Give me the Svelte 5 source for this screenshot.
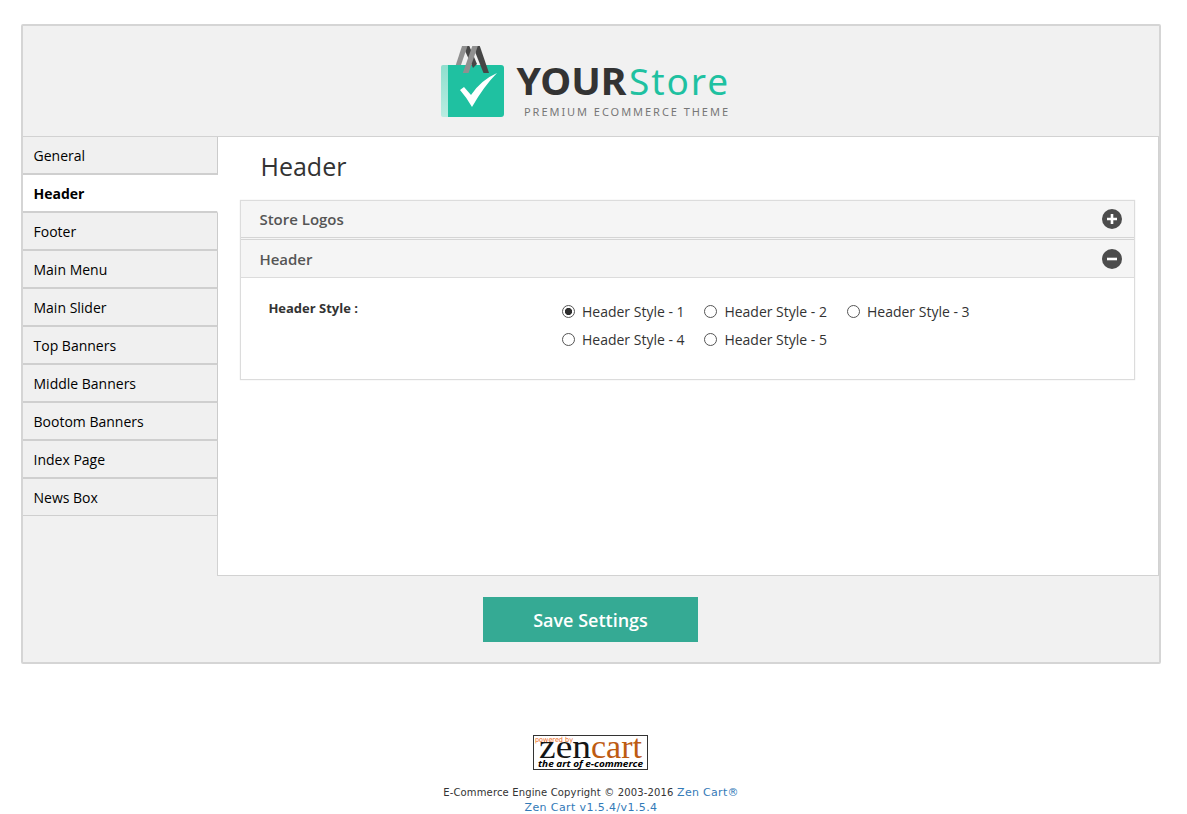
<script>
  const tabs = ['General', 'Header', 'Footer', 'Main Menu', 'Main Slider', 'Top Banners', 'Middle Banners', 'Bootom Banners', 'Index Page', 'News Box'];
  let active = $state('Header');
  let style = $state(1);
</script>

<div class="page">
  <div class="frame">
    <header>
      <svg class="logo" width="296" height="80" viewBox="0 0 296 80">
        <defs>
          <linearGradient id="side" x1="0" y1="0" x2="0" y2="1"><stop offset="0" stop-color="#8fdfce" /><stop offset="1" stop-color="#b9ece1" /></linearGradient>
        </defs>
        <path d="M7 21H61Q64 21 64 24V70Q64 73 61 73H7Z" fill="#1fc1a1" />
        <path d="M1 23Q1 21 3 21H8V73H3Q1 73 1 71Z" fill="url(#side)" />
        <path d="M24 2H29.3L37 20L33 24L25.5 8Z" fill="#464646" />
        <path d="M22 2H27.5L21 21H15.8Z" fill="#909090" />
        <path d="M35 2H39.8L49 29H43.5L35.5 9Z" fill="#464646" />
        <path d="M32.3 2H37.8L28.5 29H22.8Z" fill="#909090" />
        <path d="M20 46L24 43L31 51Q41 36 57 29Q44 42 32 63Q27 54 20 46Z" fill="#fff" />
        <text x="76.5" y="51" textLength="110" lengthAdjust="spacingAndGlyphs" font-size="37" font-weight="700" fill="#333">YOUR</text>
        <text x="189" y="51" textLength="99" lengthAdjust="spacing" font-size="37" fill="#1fc1a1">Store</text>
        <text x="84" y="72" textLength="204" lengthAdjust="spacing" font-size="11" fill="#777">PREMIUM ECOMMERCE THEME</text>
      </svg>
    </header>
    <div class="main">
      <nav>
        {#each tabs as tab}
          <button class="tab" class:active={tab === active} onclick={() => (active = tab)}>{tab}</button>
        {/each}
      </nav>
      <section class="content">
        <h1>Header</h1>
        <div class="accordion">
          <div class="bar first">
            <span>Store Logos</span>
            <svg width="20" height="20" viewBox="0 0 20 20"><circle cx="10" cy="10" r="10" fill="#4c4c4c" /><path d="M5 10H15M10 5V15" stroke="#fff" stroke-width="2.6" /></svg>
          </div>
          <div class="bar">
            <span>Header</span>
            <svg width="20" height="20" viewBox="0 0 20 20"><circle cx="10" cy="10" r="10" fill="#4c4c4c" /><path d="M5 10H15" stroke="#fff" stroke-width="2.6" /></svg>
          </div>
          <div class="body">
            <div class="label">Header Style :</div>
            <div class="options">
              {#each [1, 2, 3, 4, 5] as n}
                <label><input type="radio" name="style" value={n} bind:group={style} /><span>Header Style - {n}</span></label>
              {/each}
            </div>
          </div>
        </div>
      </section>
    </div>
    <div class="actions"><button class="save">Save Settings</button></div>
  </div>
  <footer>
    <svg width="115" height="35" viewBox="0 0 115 35">
      <rect x=".5" y=".5" width="114" height="34" fill="#fff" stroke="#333" />
      <text x="6" y="23" class="zen" textLength="52" lengthAdjust="spacingAndGlyphs" fill="#151515">zen</text>
      <text x="58" y="23" class="zen" textLength="51" lengthAdjust="spacingAndGlyphs" fill="#bd5b12">cart</text>
      <text x="2" y="7" class="powered" textLength="38" lengthAdjust="spacingAndGlyphs">powered by</text>
      <text x="5" y="32" class="art" textLength="105" lengthAdjust="spacingAndGlyphs">the art of e-commerce</text>
    </svg>
    <p><span class="small">E-Commerce Engine Copyright © 2003-2016</span> <a class="brand" href="#zen">Zen Cart®</a><br /><a class="version" href="#version">Zen Cart v1.5.4/v1.5.4</a></p>
  </footer>
</div>

<style>
  :global(body) { margin: 0; background: #fff; overflow: hidden; }
  .page { box-sizing: border-box; height: 814px; padding: 24px 26px 0 21px; font-family: "Open Sans", sans-serif; color: #333; overflow: hidden; }
  .frame { box-sizing: border-box; height: 640px; border: 2px solid #d5d5d5; border-radius: 2px; background: #f1f1f1; }
  header { box-sizing: border-box; height: 111px; padding: 18px 0 0 417px; border-bottom: 1px solid #d2d2d2; }
  .logo { display: block; font-family: "Noto Sans", sans-serif; }
  .main { display: flex; height: 439px; }
  nav { width: 195px; display: flex; flex-direction: column; flex: none; position: relative; z-index: 1; }
  .tab { box-sizing: border-box; height: 38px; padding: 1px 0 0 10.5px; border: 0; border-bottom: 2px solid #cfcfcf; border-right: 1px solid #cbcbcb; background: #f0f0f0; text-align: left; font: 14px/35px "Open Sans", sans-serif; color: #000; }
  .tab.active { background: #fff; font-weight: 700; border-right-color: #fff; }
  .tab:last-child { border-bottom-width: 1px; height: 37px; }
  .content { box-sizing: border-box; flex: 1; margin-left: -1px; border: 1px solid #d2d2d2; border-width: 0 1px 1px; background: #fff; padding: 0 23px 0 22px; }
  h1 { box-sizing: border-box; margin: 0; padding: 11px 0 0 20.5px; height: 63px; font-size: 25px; line-height: 36px; font-weight: 400; }
  .accordion { box-sizing: border-box; height: 180px; border: 1px solid #dcdcdc; box-shadow: 0 0 1px #ddd; }
  .bar { box-sizing: border-box; height: 38px; padding: 0 12px 0 18.4px; display: flex; align-items: center; justify-content: space-between; background: #f5f5f5; border-bottom: 1px solid #dcdcdc; font-size: 15px; line-height: 20px; font-weight: 600; color: #555; }
  .bar.first { height: 39px; padding-bottom: 1px; border-bottom: 3px double #d5d5d5; }
  .bar svg { display: block; }
  .body { display: flex; padding: 19px 0 0 27.4px; }
  .label { width: 290.6px; padding-top: 1px; font-size: 13px; line-height: 20px; font-weight: 700; }
  .options { display: grid; grid-template-columns: 142.4px 142.6px 142.5px; grid-auto-rows: 28px; }
  label { display: flex; align-items: center; gap: 7px; font-size: 14px; white-space: nowrap; }
  input { appearance: none; box-sizing: border-box; flex: none; width: 13px; height: 13px; margin: 0 0 0 3px; border: 1px solid #555; border-radius: 50%; background: #fff; }
  input:checked { background: radial-gradient(circle, #2e2e2e 3.3px, #fff 3.9px); }
  .actions { display: flex; justify-content: center; padding: 21px 2px 0 0; }
  .save { width: 215px; height: 45px; border: 0; padding: 1px 0 0 1px; background: #35aa94; color: #fff; font: 600 18px/44px "Open Sans", sans-serif; }
  footer { display: flex; flex-direction: column; align-items: center; padding-top: 71px; font-family: Verdana, "DejaVu Sans", sans-serif; }
  footer svg { display: block; margin-right: 1px; }
  .zen { font: 34px "Liberation Serif", serif; }
  .powered { font: 7px "DejaVu Sans", sans-serif; fill: #ee6b20; }
  .art { font: italic bold 9px "Open Sans", sans-serif; fill: #000; }
  p { margin: 15px 0 0; font-size: 11px; line-height: 15px; text-align: center; white-space: nowrap; }
  .small { font-size: 10px; letter-spacing: .15px; }
  .brand { letter-spacing: .3px; }
  .version { letter-spacing: .4px; }
  a { color: #337ab7; text-decoration: none; }
</style>
